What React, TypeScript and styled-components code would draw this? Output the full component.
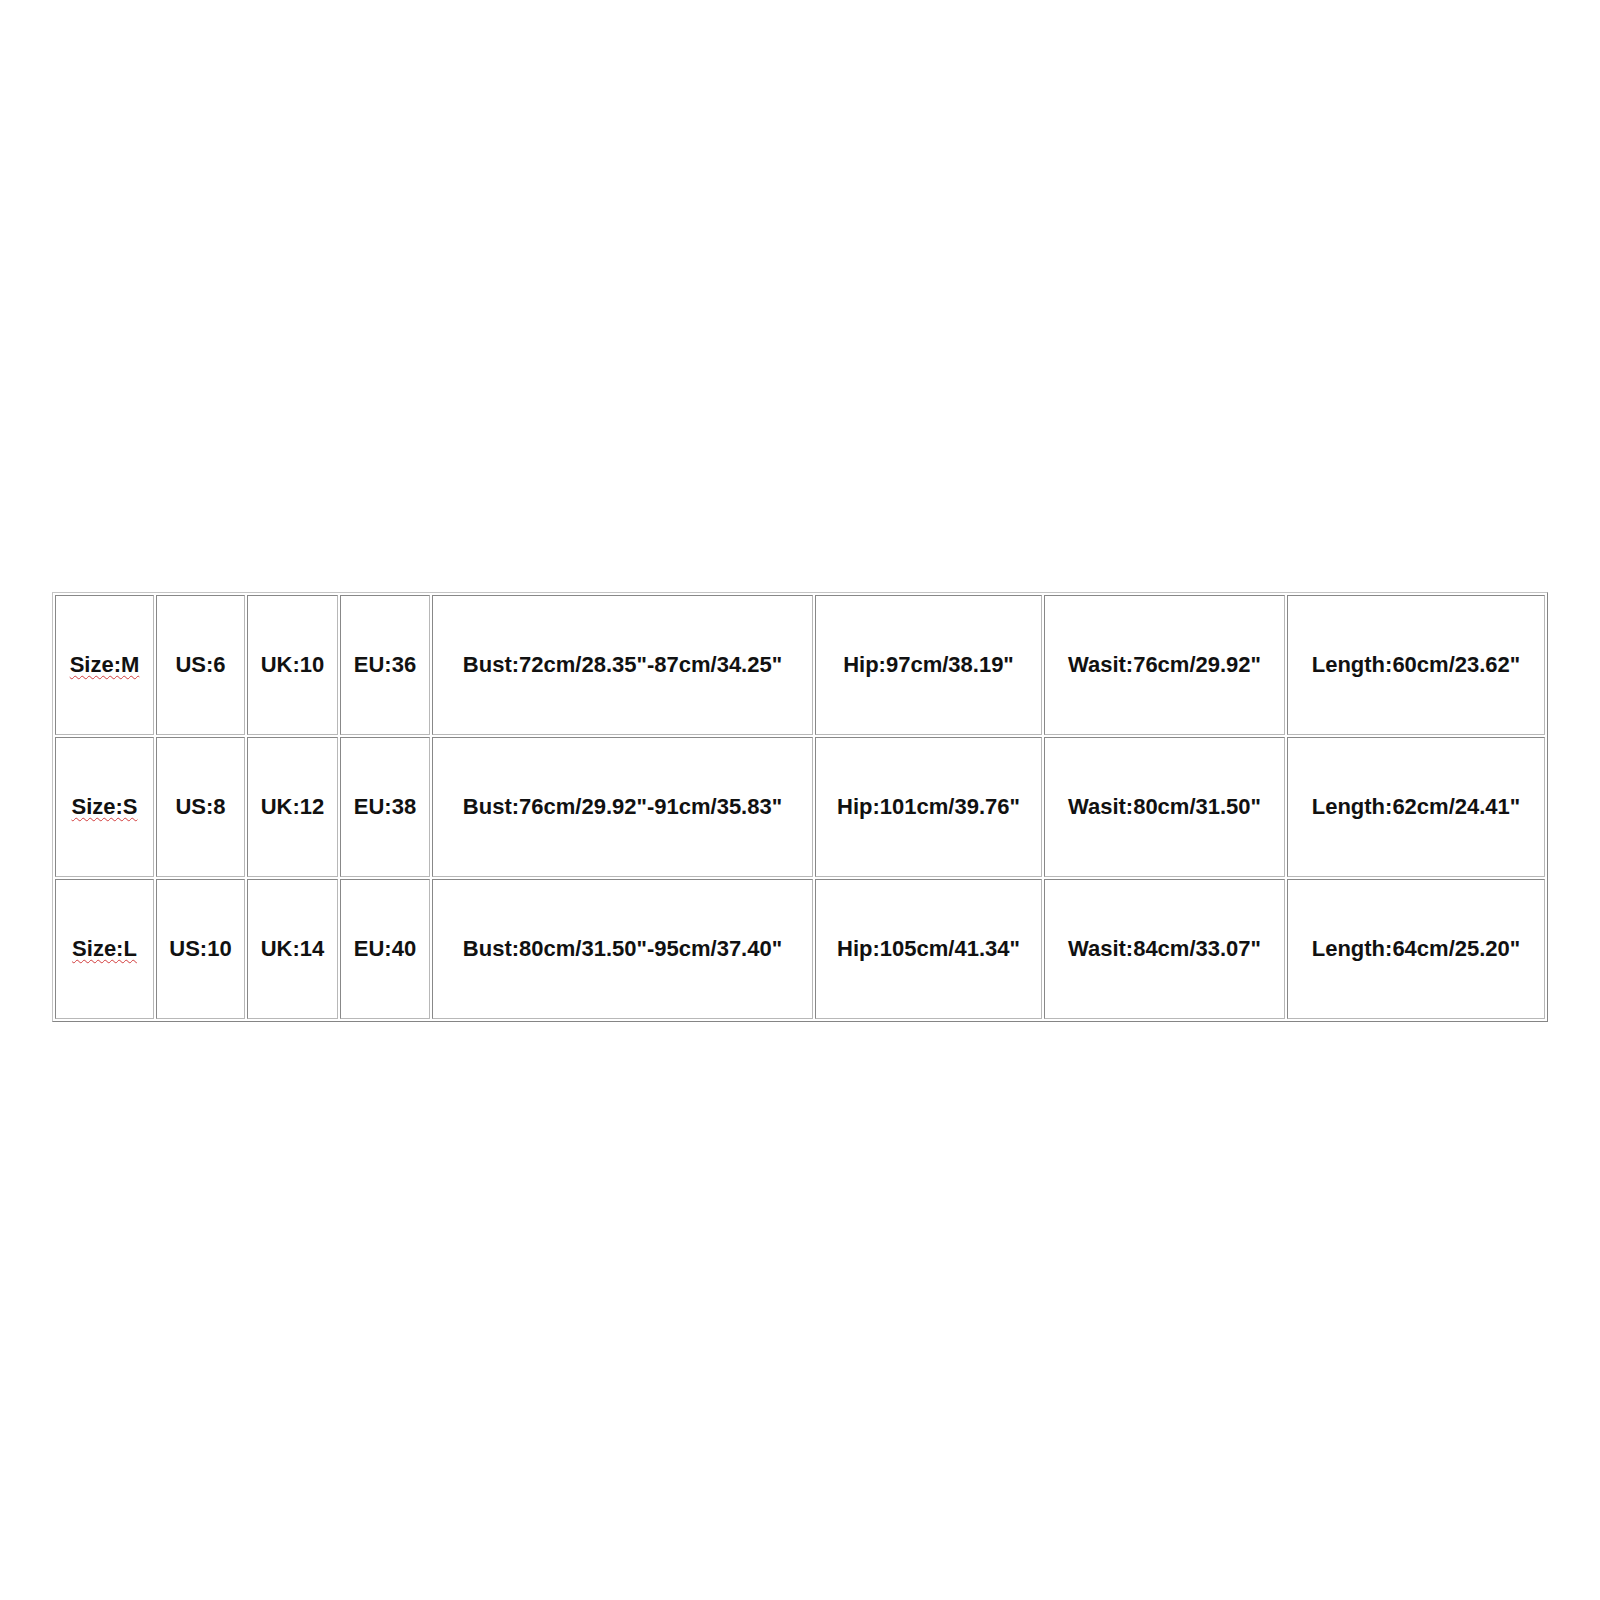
import { Fragment } from 'react';
import styled, { createGlobalStyle } from 'styled-components';

const GlobalStyle = createGlobalStyle`
  html, body{
    margin: 0;
    padding: 0;
    background: #fff;
  }
  body{
    font-family: "Liberation Sans", Arial, sans-serif;
    width: 1600px;
    height: 1600px;
  }
`;

const Page = styled.main`
  width: 1600px;
  height: 1600px;
  padding: 592px 0 0 52px;
  box-sizing: border-box;
`;

const SizeTable = styled.div`
  display: grid;
  grid-template-columns: 99px 89px 91px 90px 381px 227px 241px 258px;
  grid-auto-rows: 140px;
  gap: 2px;
  padding: 2px;
  width: 1496px;
  box-sizing: border-box;
  border: 1px solid;
  border-color: #c4c4c4 #858585 #858585 #c4c4c4;
`;

const Cell = styled.div`
  display: flex;
  align-items: center;
  justify-content: center;
  border: 1px solid;
  border-color: #888 #b8b8b8 #b8b8b8 #888;
  font-size: 22px;
  font-weight: 700;
  color: #111;
  white-space: nowrap;
`;

const Misspelled = styled.span`
  text-decoration: underline wavy #d23c3c;
  text-decoration-thickness: 1px;
  text-underline-offset: 3px;
`;

type SizeRow = {
  size: string;
  us: string;
  uk: string;
  eu: string;
  bust: string;
  hip: string;
  waist: string;
  length: string;
};

const rows: SizeRow[] = [
  { size: 'Size:M', us: 'US:6', uk: 'UK:10', eu: 'EU:36', bust: 'Bust:72cm/28.35"-87cm/34.25"', hip: 'Hip:97cm/38.19"', waist: 'Wasit:76cm/29.92"', length: 'Length:60cm/23.62"' },
  { size: 'Size:S', us: 'US:8', uk: 'UK:12', eu: 'EU:38', bust: 'Bust:76cm/29.92"-91cm/35.83"', hip: 'Hip:101cm/39.76"', waist: 'Wasit:80cm/31.50"', length: 'Length:62cm/24.41"' },
  { size: 'Size:L', us: 'US:10', uk: 'UK:14', eu: 'EU:40', bust: 'Bust:80cm/31.50"-95cm/37.40"', hip: 'Hip:105cm/41.34"', waist: 'Wasit:84cm/33.07"', length: 'Length:64cm/25.20"' },
];

export default function App() {
  return (
    <>
      <GlobalStyle />
      <Page>
        <SizeTable>
          {rows.map((r) => (
            <Fragment key={r.size}>
              <Cell><Misspelled>{r.size}</Misspelled></Cell>
              <Cell>{r.us}</Cell>
              <Cell>{r.uk}</Cell>
              <Cell>{r.eu}</Cell>
              <Cell>{r.bust}</Cell>
              <Cell>{r.hip}</Cell>
              <Cell>{r.waist}</Cell>
              <Cell>{r.length}</Cell>
            </Fragment>
          ))}
        </SizeTable>
      </Page>
    </>
  );
}
